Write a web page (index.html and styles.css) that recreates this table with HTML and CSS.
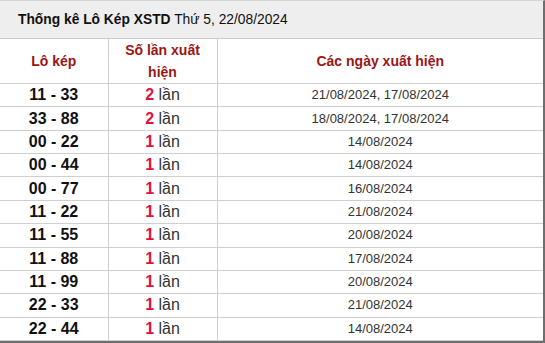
FILE: index.html
```html
<!DOCTYPE html>
<html lang="vi">
<head>
<meta charset="utf-8">
<link rel="stylesheet" href="styles.css">
</head>
<body>
<div class="box">
  <div class="title"><b>Thống kê Lô Kép XSTD</b> Thứ 5, 22/08/2024</div>
  <table class="stats">
    <colgroup><col class="c1"><col class="c2"><col class="c3"></colgroup>
    <thead>
      <tr><th>Lô kép</th><th>Số lần xuất hiện</th><th>Các ngày xuất hiện</th></tr>
    </thead>
    <tbody>
      <tr><td class="pair">11 - 33</td><td class="cnt"><b>2</b> lần</td><td class="dates">21/08/2024, 17/08/2024</td></tr>
      <tr><td class="pair">33 - 88</td><td class="cnt"><b>2</b> lần</td><td class="dates">18/08/2024, 17/08/2024</td></tr>
      <tr><td class="pair">00 - 22</td><td class="cnt"><b>1</b> lần</td><td class="dates">14/08/2024</td></tr>
      <tr><td class="pair">00 - 44</td><td class="cnt"><b>1</b> lần</td><td class="dates">14/08/2024</td></tr>
      <tr><td class="pair">00 - 77</td><td class="cnt"><b>1</b> lần</td><td class="dates">16/08/2024</td></tr>
      <tr><td class="pair">11 - 22</td><td class="cnt"><b>1</b> lần</td><td class="dates">21/08/2024</td></tr>
      <tr><td class="pair">11 - 55</td><td class="cnt"><b>1</b> lần</td><td class="dates">20/08/2024</td></tr>
      <tr><td class="pair">11 - 88</td><td class="cnt"><b>1</b> lần</td><td class="dates">17/08/2024</td></tr>
      <tr><td class="pair">11 - 99</td><td class="cnt"><b>1</b> lần</td><td class="dates">20/08/2024</td></tr>
      <tr><td class="pair">22 - 33</td><td class="cnt"><b>1</b> lần</td><td class="dates">21/08/2024</td></tr>
      <tr><td class="pair">22 - 44</td><td class="cnt"><b>1</b> lần</td><td class="dates">14/08/2024</td></tr>
    </tbody>
  </table>
</div>
</body>
</html>
```
FILE: styles.css
```css
html, body {
  margin: 0;
  padding: 0;
  background: #fff;
}
body {
  font-family: "Liberation Sans", Arial, sans-serif;
  color: #222;
}
.box {
  width: 543px;
  height: 340px;
  border-top: 1px solid #d6d6d6;
  border-right: 2px solid #6e6e6e;
  border-bottom: 2px solid #6e6e6e;
  overflow: hidden;
}
.title {
  height: 37px;
  line-height: 37px;
  background: #efeeee;
  border-bottom: 1px solid #c9c9c9;
  padding-left: 18px;
  font-size: 13.8px;
  color: #111;
}
.title b {
  font-weight: bold;
}
.stats {
  width: 543px;
  border-collapse: collapse;
  table-layout: fixed;
}
.c1 { width: 108px; }
.c2 { width: 109px; }
.c3 { width: auto; }
.stats th, .stats td {
  border-left: 1px solid #cfcfcf;
  border-bottom: 1px solid #cfcfcf;
  text-align: center;
  padding: 0;
}
.stats th:first-child, .stats td:first-child {
  border-left: none;
}
.stats th {
  height: 44px;
  color: #9a1616;
  font-size: 14px;
  font-weight: bold;
  line-height: 22px;
  padding: 0 12px;
}
.stats th:first-child { padding: 0; }
.stats td {
  height: 22.36px;
  line-height: 18px;
}
.pair {
  font-size: 16px;
  font-weight: bold;
  color: #111;
}
.cnt {
  font-size: 16px;
  color: #333;
}
.cnt b {
  color: #e2103d;
  font-weight: bold;
}
.dates {
  font-size: 13px;
  color: #333;
}
```
